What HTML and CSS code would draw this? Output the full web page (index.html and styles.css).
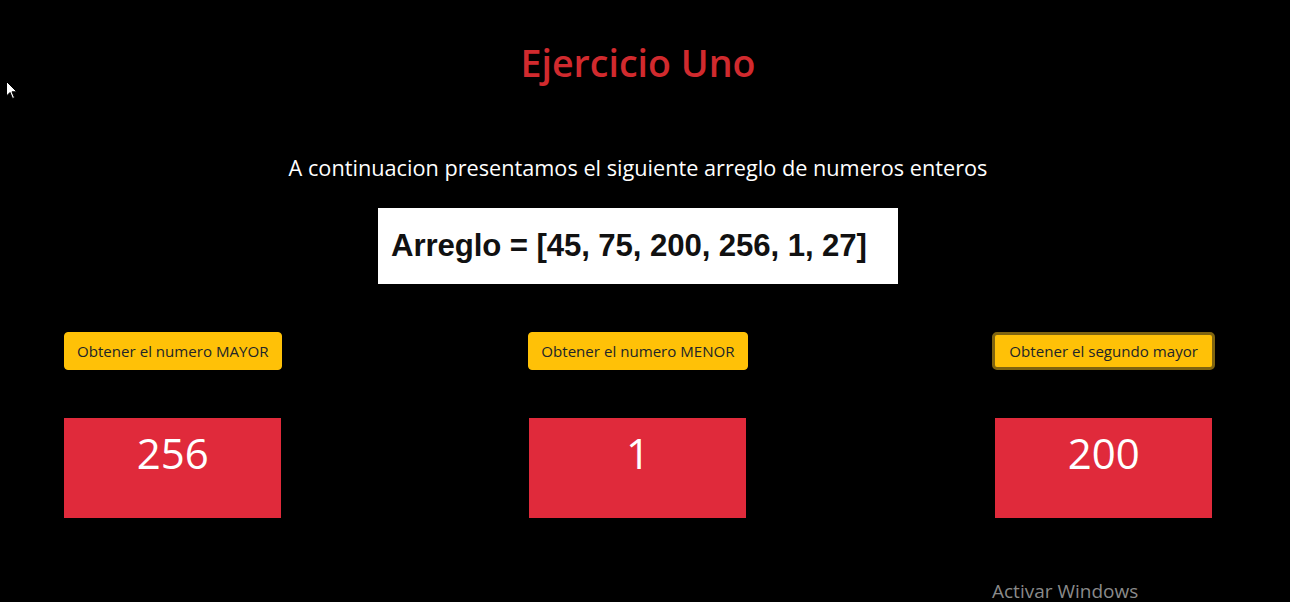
FILE: index.html
```html
<!DOCTYPE html>
<html lang="es">
<head>
<meta charset="utf-8">
<title>Ejercicio Uno</title>
<link rel="stylesheet" href="styles.css">
</head>
<body>
<div class="page">
  <h1 class="title">Ejercicio Uno</h1>
  <p class="subtitle">A continuacion presentamos el siguiente arreglo de numeros enteros</p>
  <div class="array-box">Arreglo = [45, 75, 200, 256, 1, 27]</div>
  <div class="row">
    <div class="col">
      <button class="btn">Obtener el numero MAYOR</button>
      <div class="result">256</div>
    </div>
    <div class="col">
      <button class="btn">Obtener el numero MENOR</button>
      <div class="result">1</div>
    </div>
    <div class="col">
      <button class="btn btn-focus">Obtener el segundo mayor</button>
      <div class="result">200</div>
    </div>
  </div>
</div>
<div class="watermark">Activar Windows</div>
<svg class="cursor" width="12" height="19" viewBox="0 0 12 19"><path d="M0.5 0.5 L0.5 15 L4 11.5 L6.5 17.5 L8.5 16.6 L6 10.8 L10.8 10.8 Z" fill="#fff" stroke="#000" stroke-width="1"/></svg>
</body>
</html>
```
FILE: styles.css
```css
html, body {
  margin: 0;
  padding: 0;
  background: #000;
  height: 100%;
  overflow: hidden;
}
body {
  font-family: "Open Sans", "Noto Sans", sans-serif;
  color: #fff;
  position: relative;
}
.page {
  width: 1276px;
  display: flex;
  flex-direction: column;
  align-items: center;
  padding-top: 39px;
}
.title {
  margin: 0;
  font-size: 37.6px;
  line-height: 48px;
  font-weight: 600;
  color: #d12a2e;
}
.subtitle {
  margin: 66px 0 0;
  font-size: 21.7px;
  line-height: 30px;
}
.array-box {
  margin-top: 25px;
  width: 520px;
  height: 76px;
  box-sizing: border-box;
  padding-left: 13px;
  background: #fff;
  color: #111;
  font-family: "Liberation Sans", Arial, sans-serif;
  font-weight: 700;
  font-size: 31.2px;
  display: flex;
  align-items: center;
  letter-spacing: -0.1px;
}
.row {
  align-self: stretch;
  display: flex;
  justify-content: space-between;
  padding: 0 63px 0 64px;
  margin-top: 48px;
}
.col {
  display: flex;
  flex-direction: column;
  align-items: center;
  gap: 48px;
}
.btn {
  font-family: "Open Sans", "Noto Sans", sans-serif;
  font-size: 15.1px;
  line-height: 24px;
  padding: 6px 12px;
  border: 1px solid #ffc107;
  border-radius: 4px;
  background: #ffc107;
  color: #212529;
  height: 38px;
  white-space: nowrap;
}
.btn-focus {
  border: 3px solid #7f6410;
  border-radius: 5px;
  padding: 4px 14px;
  margin: 0 -2px;
}
.result {
  width: 217px;
  height: 100px;
  background: #e02a3b;
  color: #fff;
  text-align: center;
  font-size: 42px;
  line-height: 70px;
}
.watermark {
  position: absolute;
  left: 992px;
  top: 578px;
  font-size: 19px;
  color: #8a8a8a;
  font-family: "Open Sans", "Noto Sans", sans-serif;
  white-space: nowrap;
}
.cursor {
  position: absolute;
  left: 6px;
  top: 81px;
}
```
